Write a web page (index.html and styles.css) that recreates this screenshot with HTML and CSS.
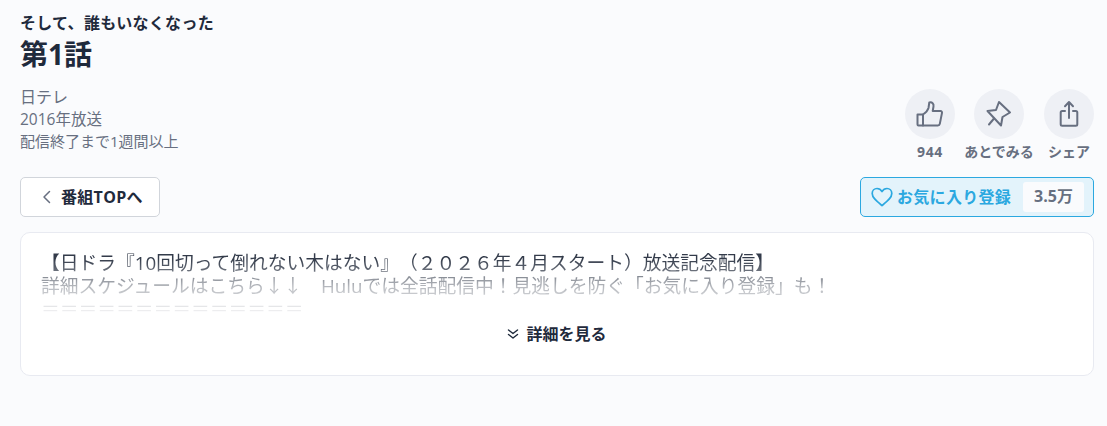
FILE: index.html
```html
<!DOCTYPE html>
<html lang="ja">
<head>
    <meta charset="UTF-8">
    <meta name="viewport" content="width=device-width, initial-scale=1.0">
    <title>第1話</title>
    <link rel="stylesheet" href="styles.css">
</head>
<body>
    <div class="page">
        <p class="series">そして、誰もいなくなった</p>
        <h1 class="episode">第1話</h1>
        <div class="info-row">
            <div class="meta">
                <p class="meta-station">日テレ</p>
                <p class="meta-year">2016年放送</p>
                <p>配信終了まで1週間以上</p>
            </div>
            <div class="actions">
                <div class="action action-like">
                    <span class="action-icon">
                        <svg width="30" height="30" viewBox="0 0 30 30" fill="none" stroke="#676f80" stroke-width="2" stroke-linejoin="round" stroke-linecap="round">
                            <path d="M2.500 15.500H8v11H3.500a1 1 0 0 1-1-1z"/>
                            <path d="M8 15.500c2.500-1.500 4.500-3.500 5.500-6.500l.8-5.500c2.800-.7 4.700 1.200 4.200 4l-.8 4.500h7.800c1 0 1.700.9 1.500 1.900l-2.200 11c-.2 1-.9 1.600-1.900 1.600H8"/>
                        </svg>
                    </span>
                    <span class="action-label">944</span>
                </div>
                <div class="action action-later">
                    <span class="action-icon">
                        <svg width="30" height="30" viewBox="0 0 30 30" fill="none" stroke="#676f80" stroke-width="2" stroke-linejoin="round" stroke-linecap="round">
                            <path d="M15 3l-3 8-8.500 1L17 26.500l1.500-8.500 7.500-4.500z"/>
                            <path d="M10 19.500l-5 6"/>
                        </svg>
                    </span>
                    <span class="action-label">あとでみる</span>
                </div>
                <div class="action action-share">
                    <span class="action-icon">
                        <svg width="30" height="30" viewBox="0 0 30 30" fill="none" stroke="#676f80" stroke-width="2" stroke-linejoin="round" stroke-linecap="round">
                            <path d="M11 12H8.200a1.500 1.500 0 0 0-1.500 1.500v11.700a1.500 1.500 0 0 0 1.500 1.500h13.600a1.500 1.500 0 0 0 1.500-1.500V13.500a1.500 1.500 0 0 0-1.500-1.500H19"/>
                            <path d="M15 19V3.200M11 7.200l4-4.200 4 4.200"/>
                        </svg>
                    </span>
                    <span class="action-label">シェア</span>
                </div>
            </div>
        </div>
        <div class="button-row">
            <a class="back-button">
                <svg width="12" height="16" viewBox="0 0 12 16" fill="none" stroke="#676f80" stroke-width="1.500" stroke-linecap="round" stroke-linejoin="round"><path d="M8.500 2.500L3 8l5.500 5.500"/></svg>
                <span>番組TOPへ</span>
            </a>
            <div class="favorite">
                <span class="favorite-main">
                    <svg width="22" height="20" viewBox="0 0 22 20" fill="none" stroke="#2ba8e0" stroke-width="1.700" stroke-linejoin="round"><path d="M11 18.500C6 14.500 1.200 11 1.200 6.500 1.200 3.500 3.500 1.500 6 1.500c2 0 3.800 1 5 3 1.200-2 3-3 5-3 2.500 0 4.800 2 4.800 5 0 4.500-4.800 8-9.800 12z"/></svg>
                    <span class="button-text">お気に入り登録</span>
                </span>
                <span class="favorite-count">3.5万</span>
            </div>
        </div>
        <section class="description">
            <div class="description-text">
                <p>【日ドラ『10回切って倒れない木はない』（２０２６年４月スタート）放送記念配信】</p>
                <p>詳細スケジュールはこちら↓↓　Huluでは全話配信中！見逃しを防ぐ「お気に入り登録」も！</p>
                <p>＝＝＝＝＝＝＝＝＝＝＝＝＝＝</p>
            </div>
            <div class="more">
                <svg width="14" height="14" viewBox="0 0 14 14" fill="none" stroke="#1f2a3c" stroke-width="1.400" stroke-linecap="round" stroke-linejoin="round"><path d="M2.500 3l4.500 3.500L11.500 3M2.500 7.500L7 11l4.500-3.500"/></svg>
                <span>詳細を見る</span>
            </div>
        </section>
    </div>
</body>
</html>
```

FILE: styles.css
```css
* {
    box-sizing: border-box;
}
body {
    margin: 0;
    background: #fafbfd;
    color: #1f2a3c;
    font-family: "Open Sans", "Noto Sans CJK JP", sans-serif;
    text-spacing-trim: space-all;
}
p, h1 {
    margin: 0;
}
.page {
    padding: 13px 13px 0 20px;
}
.series {
    font-size: 16px;
    font-weight: 700;
    line-height: 20px;
    letter-spacing: 0.3px;
}
.episode {
    font-size: 28px;
    font-weight: 700;
    line-height: 34px;
    margin-top: 4px;
}
.info-row {
    display: flex;
    justify-content: space-between;
    align-items: flex-end;
    margin-top: 15px;
}
.meta {
    color: #676f80;
    font-size: 15px;
    line-height: 22px;
    padding-bottom: 9px;
}
.meta-station {
    font-size: 16px;
}
.meta-year {
    font-size: 15.5px;
}
.actions {
    display: flex;
}
.action {
    display: flex;
    flex-direction: column;
    align-items: center;
    gap: 4px;
}
.action-like {
    width: 50px;
    margin-right: 19px;
}
.action-later {
    width: 50px;
    margin-right: 20px;
}
.action-share {
    width: 50px;
}
.action-icon {
    display: flex;
    align-items: center;
    justify-content: center;
    width: 50px;
    height: 50px;
    border-radius: 50%;
    background: #eef0f5;
}
.action-label {
    color: #676f80;
    font-size: 14px;
    font-weight: 700;
    line-height: 18px;
    white-space: nowrap;
}
.action-like .action-label {
    letter-spacing: 0.6px;
}
.button-row {
    display: flex;
    justify-content: space-between;
    align-items: center;
    margin-top: 16px;
}
.back-button {
    display: flex;
    align-items: center;
    gap: 8px;
    width: 140px;
    height: 40px;
    padding-left: 20px;
    background: #fff;
    border: 1px solid #d1d5db;
    border-radius: 5px;
    font-size: 16px;
    font-weight: 700;
    letter-spacing: 0.3px;
}
.back-button span, .button-text {
    margin-bottom: 3px;
}
.favorite {
    display: flex;
    align-items: center;
    justify-content: space-between;
    width: 234px;
    height: 40px;
    padding: 0 9px 0 10px;
    background: #e3f3fb;
    border: 1px solid #2ba8e0;
    border-radius: 5px;
}
.favorite-main {
    display: flex;
    align-items: center;
    gap: 4px;
    color: #2ba8e0;
    font-size: 16px;
    font-weight: 700;
    letter-spacing: 0.3px;
}
.favorite-count {
    width: 61px;
    height: 30px;
    line-height: 28px;
    text-align: center;
    background: #fafbfd;
    border-radius: 3px;
    color: #676f80;
    font-size: 16px;
    font-weight: 700;
}
.description {
    margin-top: 15px;
    height: 144px;
    padding: 18px 21px 0 20px;
    background: #fff;
    border: 1px solid #e8eaf1;
    border-radius: 10px;
}
.description-text {
    height: 70px;
    overflow: hidden;
    font-size: 18.75px;
    line-height: 23px;
    color: #333b4a;
    -webkit-mask-image: linear-gradient(#000 8px, rgba(0, 0, 0, 0.35) 36px, rgba(0, 0, 0, 0.1) 58px, transparent 70px);
    mask-image: linear-gradient(#000 8px, rgba(0, 0, 0, 0.35) 36px, rgba(0, 0, 0, 0.1) 58px, transparent 70px);
}
.more {
    display: flex;
    align-items: center;
    justify-content: center;
    gap: 6px;
    margin-top: 1px;
    font-size: 16px;
    font-weight: 700;
    line-height: 24px;
}
```
